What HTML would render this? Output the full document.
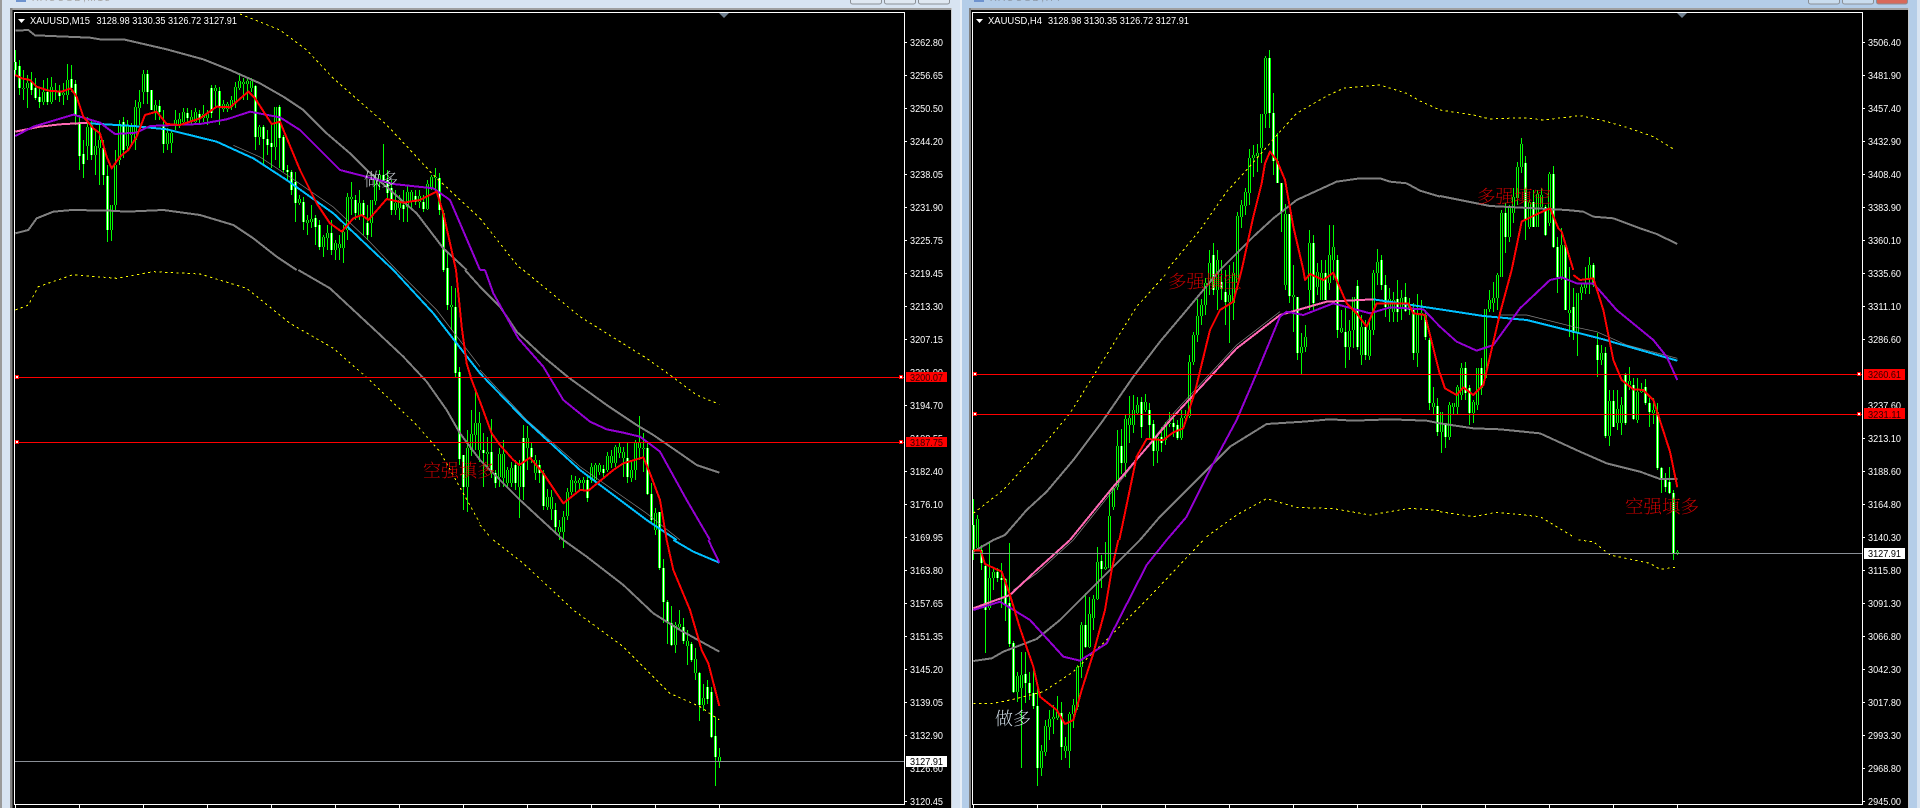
<!DOCTYPE html>
<html lang="zh">
<head>
<meta charset="utf-8">
<title>XAUUSD</title>
<style>
html,body{margin:0;padding:0;width:1920px;height:808px;overflow:hidden;background:#000}
svg{display:block;position:absolute;left:0;top:0}
.w{stroke:#00ff00;stroke-width:1;fill:none;shape-rendering:crispEdges}
.g{fill:none;stroke:#808080;stroke-width:6;stroke-linejoin:round;shape-rendering:crispEdges}
.r{fill:none;stroke:#ff0000;stroke-width:6;stroke-linejoin:round;shape-rendering:crispEdges}
.p{fill:none;stroke:#9400d3;stroke-width:6;stroke-linejoin:round;shape-rendering:crispEdges}
.b{fill:none;stroke:#00bfff;stroke-width:6;stroke-linejoin:round;shape-rendering:crispEdges}
.k{fill:none;stroke:#ff69b4;stroke-width:6;stroke-linejoin:round;shape-rendering:crispEdges}
.y{fill:none;stroke:#ffff00;stroke-width:3;stroke-dasharray:7 10;shape-rendering:crispEdges}
.t{fill:none;stroke:#8a8a8a;stroke-width:2}
text{font-family:"Liberation Sans","Noto Sans CJK SC",sans-serif}
.ax{font-size:10px;fill:#fff}
.ti{font-size:10px;fill:#fff}
.lb{font-size:10px;fill:#300}
.cn{font-family:"Liberation Serif","Noto Serif CJK SC",serif;font-size:18px;font-weight:200}
</style>
</head>
<body>
<svg width="1920" height="808" viewBox="0 0 1920 808" xmlns="http://www.w3.org/2000/svg">
<defs>
<path id="lw" d="M15.5 62V70M19.5 66V88M31.5 82V90M35.5 88V98M39.5 97V102M47.5 92V102M59.5 92V96M71.5 79V88M75.5 84V115M79.5 123V156M83.5 154V164M91.5 125V155M103.5 148V175M107.5 176V230M123.5 122V150M147.5 74V92M151.5 90V110M159.5 106V112M163.5 126V144M187.5 113V118M199.5 114V118M211.5 88V113M219.5 91V106M255.5 86V137M263.5 127V139M267.5 139V145M271.5 143V147M279.5 107V138M283.5 137V170M287.5 170V172M291.5 172V190M295.5 182V203M303.5 202V222M315.5 218V227M319.5 225V247M331.5 233V250M355.5 200V213M363.5 203V215M367.5 223V235M383.5 175V182M387.5 180V193M391.5 188V210M403.5 205V209M415.5 196V202M423.5 202V209M439.5 178V210M443.5 213V270M447.5 268V305M455.5 307V373M459.5 372V459M463.5 455V487M483.5 450V453M491.5 452V473M495.5 473V483M515.5 465V483M523.5 438V487M531.5 448V457M539.5 465V473M543.5 473V506M555.5 510V527M587.5 480V498M603.5 469V473M627.5 458V477M647.5 448V494M651.5 494V520M659.5 512V568M663.5 568V602M667.5 602V622M671.5 623V645M683.5 627V641M691.5 644V660M699.5 673V705M707.5 687V699M711.5 692V737M715.5 736V757"/>
<path id="lk" d="M23.5 88V89M27.5 83V88M43.5 92V102M51.5 87V102M55.5 90V92M63.5 93V95M67.5 80V95M87.5 127V146M95.5 146V155M99.5 140V148M111.5 205V230M115.5 165V205M119.5 125V160M127.5 125V146M131.5 127V135M135.5 107V140M139.5 102V108M143.5 74V92M155.5 105V112M167.5 133V144M171.5 133V143M175.5 120V125M179.5 119V125M183.5 112V122M191.5 117V122M195.5 112V122M203.5 114V118M207.5 114V118M215.5 88V91M223.5 104V109M227.5 104V109M231.5 100V107M235.5 87V103M239.5 81V88M243.5 82V84M247.5 81V84M251.5 81V88M259.5 127V137M275.5 107V147M299.5 199V203M307.5 220V223M311.5 219V222M323.5 237V247M327.5 233V238M335.5 243V250M339.5 244V248M343.5 232V248M347.5 197V230M351.5 197V199M359.5 203V215M371.5 200V223M375.5 180V201M379.5 175V180M395.5 203V210M399.5 200V208M407.5 192V207M411.5 192V202M419.5 196V202M427.5 184V209M431.5 177V188M435.5 177V178M451.5 305V307M467.5 448V487M471.5 434V450M475.5 423V435M479.5 423V450M487.5 452V454M499.5 454V477M503.5 454V478M507.5 470V483M511.5 468V483M519.5 466V487M527.5 438V448M535.5 460V473M547.5 497V507M551.5 497V509M559.5 527V532M563.5 517V532M567.5 492V516M571.5 480V492M575.5 481V483M579.5 480V483M583.5 480V483M591.5 467V480M595.5 465V480M599.5 465V472M607.5 456V470M611.5 456V463M615.5 447V463M619.5 447V453M623.5 452V458M631.5 470V478M635.5 442V470M639.5 442V448M643.5 448V449M655.5 513V530M679.5 624V627M675.5 625V645M687.5 641V646M695.5 659V673M703.5 698V705M719.5 757V761"/>
<path id="rw" d="M973.5 525V550M981.5 550V563M985.5 566V610M997.5 572V578M1001.5 578V580M1005.5 579V605M1009.5 603V644M1013.5 643V692M1025.5 674V683M1029.5 683V693M1033.5 693V706M1037.5 706V768M1061.5 713V747M1085.5 625V647M1101.5 561V569M1121.5 446V463M1141.5 402V427M1149.5 410V425M1153.5 424V451M1161.5 437V443M1173.5 423V427M1177.5 425V438M1213.5 255V290M1221.5 282V289M1225.5 292V302M1269.5 58V113M1273.5 113V161M1277.5 161V183M1281.5 183V212M1289.5 214V296M1297.5 297V353M1313.5 243V303M1325.5 273V300M1337.5 260V330M1345.5 332V347M1357.5 286V347M1365.5 327V355M1381.5 260V285M1385.5 285V307M1397.5 299V312M1405.5 297V311M1409.5 305V310M1413.5 310V353M1425.5 315V337M1429.5 340V403M1437.5 406V432M1445.5 423V437M1465.5 368V393M1469.5 388V413M1481.5 368V388M1505.5 213V237M1525.5 163V220M1533.5 202V227M1545.5 207V235M1553.5 174V247M1557.5 247V277M1565.5 245V310M1573.5 307V333M1593.5 265V285M1597.5 345V360M1605.5 353V436M1613.5 401V427M1625.5 375V423M1633.5 385V419M1645.5 387V403M1649.5 403V412M1657.5 412V468M1661.5 468V480M1665.5 480V487M1669.5 482V493M1673.5 493V553"/>
<path id="rk" d="M977.5 519V548M989.5 578V608M993.5 572V578M1017.5 676V692M1021.5 675V688M1041.5 751V768M1045.5 726V752M1049.5 719V727M1053.5 717V719M1057.5 712V718M1065.5 746V751M1069.5 714V751M1073.5 705V714M1077.5 667V707M1081.5 625V667M1089.5 614V647M1093.5 599V618M1097.5 562V599M1105.5 567V569M1109.5 516V568M1113.5 489V507M1117.5 446V487M1125.5 419V463M1129.5 418V425M1133.5 410V425M1137.5 405V413M1145.5 402V410M1157.5 437V451M1165.5 424V440M1169.5 423V424M1181.5 418V438M1185.5 416V418M1189.5 362V416M1193.5 335V362M1197.5 316V335M1201.5 305V316M1205.5 283V305M1209.5 263V283M1217.5 260V290M1229.5 295V302M1233.5 273V303M1237.5 216V283M1241.5 205V217M1245.5 192V206M1249.5 158V193M1253.5 155V158M1257.5 153V156M1261.5 114V148M1265.5 58V114M1285.5 214V285M1293.5 295V297M1301.5 347V353M1305.5 337V347M1309.5 243V290M1317.5 272V287M1321.5 273V300M1329.5 255V283M1333.5 247V260M1341.5 328V332M1349.5 331V347M1353.5 297V330M1361.5 327V355M1369.5 330V356M1373.5 273V330M1377.5 262V273M1389.5 299V309M1393.5 300V312M1401.5 298V309M1417.5 313V353M1421.5 313V315M1433.5 403V407M1441.5 412V432M1449.5 405V437M1453.5 403V407M1457.5 387V407M1461.5 368V395M1473.5 402V413M1477.5 368V405M1485.5 309V378M1489.5 300V309M1493.5 298V303M1497.5 275V298M1501.5 213V277M1509.5 207V237M1513.5 197V213M1517.5 167V198M1521.5 144V167M1529.5 202V227M1537.5 194V227M1541.5 195V207M1549.5 174V223M1561.5 245V277M1569.5 310V313M1577.5 293V333M1581.5 287V293M1585.5 283V288M1589.5 265V278M1601.5 353V360M1609.5 401V436M1617.5 409V423M1621.5 405V423M1629.5 381V385M1637.5 392V420M1641.5 389V392M1653.5 410V413M1677.5 552V554"/>
</defs>

<!-- window chrome -->
<rect width="960" height="808" fill="#d8e4f2"/>
<rect x="960" width="960" height="808" fill="#b4cde8"/>
<rect x="0" width="2" height="808" fill="#9a9a9a"/>
<rect x="1917" width="3" height="808" fill="#d8e4f2"/>
<rect x="960" width="2" height="808" fill="#e8eff7"/>
<rect x="11" y="8" width="940" height="800" fill="#000"/>
<rect x="969" y="8" width="939" height="800" fill="#000"/>
<rect x="10" y="8" width="942" height="2" fill="#a0a0a0"/>
<rect x="969" y="8" width="940" height="2" fill="#a0a0a0"/>
<rect x="10" y="8" width="2.5" height="800" fill="#808080"/>
<rect x="951" y="8" width="1" height="800" fill="#c8c8c8"/>
<rect x="969" y="8" width="2" height="800" fill="#808080"/>
<rect x="1908" y="8" width="1" height="800" fill="#c8c8c8"/>

<!-- title-bar remnants -->
<rect x="16" y="0" width="10" height="2" fill="#6e93cf"/>
<text x="32" y="1" font-size="10" fill="#a8a8a8" textLength="78">XAUUSD,M15</text>
<rect x="974" y="0" width="10" height="2" fill="#6e93cf"/>
<text x="990" y="1" font-size="10" fill="#8d98a6" textLength="70">XAUUSD,H4</text>
<g fill="#dfe8f2" stroke="#8a8f96">
<rect x="850.5" y="-4" width="31" height="8" rx="2"/>
<rect x="884.5" y="-4" width="31" height="8" rx="2"/>
<rect x="918.5" y="-4" width="31" height="8" rx="2"/>
<rect x="1808.5" y="-4" width="31" height="8" rx="2" fill="#c9dcee"/>
<rect x="1842.5" y="-4" width="31" height="8" rx="2" fill="#c9dcee"/>
<rect x="1876.5" y="-4" width="31" height="8" rx="2" fill="#d8695a"/>
</g>

<!-- frames -->
<g fill="#fff">
<rect x="14" y="12" width="891" height="1"/>
<rect x="14" y="12" width="1" height="793"/>
<rect x="904" y="12" width="1" height="793"/>
<rect x="14" y="804" width="891" height="1"/>
<rect x="972" y="12" width="891" height="1"/>
<rect x="972" y="12" width="1" height="793"/>
<rect x="1862" y="12" width="1" height="793"/>
<rect x="972" y="804" width="891" height="1"/>
</g>
<path stroke="#fff" fill="none" shape-rendering="crispEdges" d="M15.5 805V808M79.5 805V808M143.5 805V808M207.5 805V808M271.5 805V808M335.5 805V808M399.5 805V808M463.5 805V808M527.5 805V808M591.5 805V808M655.5 805V808M719.5 805V808M973.5 805V808M1037.5 805V808M1101.5 805V808M1165.5 805V808M1229.5 805V808M1293.5 805V808M1357.5 805V808M1421.5 805V808M1485.5 805V808M1549.5 805V808M1613.5 805V808M1677.5 805V808"/>

<!-- shift markers / title -->
<path d="M719 13h10l-5 5z" fill="#708090"/>
<path d="M1677 13h10l-5 5z" fill="#708090"/>
<path d="M18 19h7l-3.500 4z" fill="#fff"/>
<path d="M976 19h7l-3.500 4z" fill="#fff"/>
<text class="ti" x="30" y="24" textLength="60" lengthAdjust="spacingAndGlyphs">XAUUSD,M15</text>
<text class="ti" x="96.500" y="24" textLength="140.500" lengthAdjust="spacingAndGlyphs">3128.98 3130.35 3126.72 3127.91</text>
<text class="ti" x="988" y="24" textLength="54" lengthAdjust="spacingAndGlyphs">XAUUSD,H4</text>
<text class="ti" x="1048" y="24" textLength="141" lengthAdjust="spacingAndGlyphs">3128.98 3130.35 3126.72 3127.91</text>

<!-- LEFT candles -->
<path class="w" d="M15.5 50V75M19.500 60V95M23.500 70V100M27.500 75V108M31.500 72V95M35.500 78V100M39.500 87V108M43.500 80V105M47.500 78V105M51.500 77V104M55.500 83V100M59.500 85V102M63.500 83V105M67.500 64V100M71.500 65V92M75.500 80V125M79.500 115V170M83.500 140V178M87.500 117V160M91.500 120V160M95.500 130V175M99.500 125V185M103.500 140V185M107.500 165V242M111.500 205V241M115.500 150V210M119.500 120V165M123.500 117V158M127.500 120V150M131.500 123V145M135.500 100V150M139.500 90V125M143.500 70V104M147.500 70V104M151.500 90V110M155.500 100V120M159.500 100V120M163.500 110V153M167.500 128V150M171.500 130V153M175.500 110V130M179.500 113V128M183.500 108V125M187.500 108V122M191.500 110V125M195.500 108V125M199.500 110V125M203.500 105V122M207.500 110V125M211.500 85V118M215.500 85V107M219.500 87V125M223.500 100V112M227.500 102V112M231.500 96V110M235.500 82V108M239.500 75V90M243.500 78V100M247.500 78V100M251.500 78V92M255.500 85V150M259.500 125V145M263.500 125V165M267.500 130V155M271.500 125V168M275.500 107V160M279.500 105V168M283.500 135V172M287.500 165V180M291.500 170V195M295.500 172V222M299.500 195V205M303.500 197V230M307.500 215V235M311.500 205V228M315.500 215V245M319.500 220V250M323.500 235V257M327.500 225V250M331.500 220V255M335.500 240V260M339.500 235V260M343.500 225V263M347.500 193V240M351.500 182V215M355.500 195V220M359.500 190V220M363.500 200V235M367.500 205V240M371.500 200V237M375.500 175V205M379.500 170V190M383.500 144V180M387.500 170V200M391.500 180V215M395.500 190V215M399.500 195V220M403.500 190V222M407.500 185V222M411.500 190V210M415.500 190V205M419.500 190V208M423.500 195V212M427.500 180V210M431.500 175V190M435.500 168V190M439.500 173V215M443.500 210V272M447.500 252V310M451.500 286V330M455.500 288V377M459.500 367V465M463.500 455V510M467.500 430V512M471.500 410V456M475.500 391V450M479.500 412V462M483.500 433V487M487.500 437V470M491.500 419V478M495.500 470V488M499.500 448V487M503.500 440V487M507.500 467V487M511.500 462V487M515.500 460V490M519.500 460V518M523.500 425V500M527.500 426V470M531.500 443V463M535.500 455V480M539.500 460V483M543.500 470V510M547.500 489V510M551.500 490V520M555.500 503V532M559.500 520V540M563.500 511V548M567.500 488V520M571.500 475V495M575.500 476V492M579.500 478V490M583.500 477V490M587.500 475V502M591.500 463V483M595.500 463V483M599.500 463V475M603.500 465V478M607.500 452V472M611.500 450V468M615.500 445V467M619.500 443V458M623.500 447V477M627.500 443V483M631.500 460V482M635.500 440V480M639.500 416V460M643.500 433V472M647.500 443V495M651.500 483V523M655.500 508V535M659.500 512V570M663.500 559V623M667.500 600V644M671.500 606V646M675.500 622V653M679.500 610V630M683.500 618V644M687.500 630V665M691.500 642V662M695.500 648V680M699.500 672V721M703.500 684V711M707.500 680V704M711.500 687V738M715.500 717V786M719.500 748V768"/>
<use href="#lw" stroke="#00ff00" stroke-width="3" shape-rendering="crispEdges"/>
<use href="#lk" stroke="#00ff00" stroke-width="3" shape-rendering="crispEdges"/>
<use href="#lw" stroke="#ffffff" stroke-width="1" shape-rendering="crispEdges"/>
<use href="#lk" stroke="#000000" stroke-width="1" shape-rendering="crispEdges"/>

<!-- RIGHT candles -->
<path class="w" d="M973.500 499V560M977.500 515V550M981.500 545V570M985.500 563V653M989.500 543V610M993.500 568V590M997.500 568V582M1001.500 563V608M1005.500 578V621M1009.500 543V647M1013.500 641V693M1017.500 672V702M1021.500 652V768M1025.500 652V703M1029.500 672V700M1033.500 670V709M1037.500 688V786M1041.500 745V776M1045.500 720V756M1049.500 710V740M1053.500 705V734M1057.500 696V720M1061.500 702V760M1065.500 737V758M1069.500 712V768M1073.500 699V728M1077.500 665V710M1081.500 622V678M1085.500 593V648M1089.500 597V648M1093.500 595V630M1097.500 547V600M1101.500 555V588M1105.500 542V570M1109.500 490V568M1113.500 487V510M1117.500 430V490M1121.500 429V474M1125.500 415V477M1129.500 396V443M1133.500 395V433M1137.500 397V415M1141.500 397V438M1145.500 394V412M1149.500 403V440M1153.500 420V466M1157.500 433V463M1161.500 427V452M1165.500 422V445M1169.500 412V427M1173.500 413V437M1177.500 420V440M1181.500 410V440M1185.500 410V420M1189.500 355V418M1193.500 332V365M1197.500 299V342M1201.500 299V325M1205.500 278V315M1209.500 250V295M1213.500 243V295M1217.500 250V310M1221.500 260V300M1225.500 270V325M1229.500 265V343M1233.500 262V320M1237.500 212V290M1241.500 200V228M1245.500 188V215M1249.500 149V205M1253.500 145V177M1257.500 144V172M1261.500 114V163M1265.500 56V128M1269.500 50V128M1273.500 93V175M1277.500 133V183M1281.500 183V232M1285.500 204V290M1289.500 214V303M1293.500 265V332M1297.500 297V360M1301.500 333V375M1305.500 325V352M1309.500 230V310M1313.500 235V310M1317.500 263V295M1321.500 260V300M1325.500 260V300M1329.500 225V290M1333.500 225V280M1337.500 255V338M1341.500 310V333M1345.500 308V368M1349.500 320V360M1353.500 297V348M1357.500 280V350M1361.500 315V365M1365.500 320V360M1369.500 320V360M1373.500 270V335M1377.500 249V285M1381.500 255V290M1385.500 275V317M1389.500 288V322M1393.500 292V322M1397.500 280V322M1401.500 290V320M1405.500 283V312M1409.500 298V315M1413.500 303V360M1417.500 294V367M1421.500 300V320M1425.500 310V340M1429.500 338V410M1433.500 387V415M1437.500 398V436M1441.500 412V453M1445.500 423V448M1449.500 402V440M1453.500 403V415M1457.500 385V415M1461.500 363V400M1465.500 362V400M1469.500 385V425M1473.500 400V423M1477.500 368V410M1481.500 358V395M1485.500 309V378M1489.500 290V312M1493.500 282V312M1497.500 273V310M1501.500 210V277M1505.500 203V253M1509.500 205V242M1513.500 188V223M1517.500 162V205M1521.500 138V173M1525.500 156V240M1529.500 200V229M1533.500 190V227M1537.500 190V227M1541.500 188V209M1545.500 205V236M1549.500 172V226M1553.500 166V248M1557.500 237V293M1561.500 228V280M1565.500 245V310M1569.500 267V337M1573.500 288V340M1577.500 293V356M1581.500 283V300M1585.500 267V294M1589.500 257V294M1593.500 263V287M1597.500 333V377M1601.500 345V365M1605.500 347V438M1609.500 390V446M1613.500 390V427M1617.500 390V430M1621.500 397V435M1625.500 373V425M1629.500 367V390M1633.500 378V420M1637.500 378V423M1641.500 383V393M1645.500 379V405M1649.500 398V427M1653.500 398V424M1657.500 403V470M1661.500 467V493M1665.500 473V492M1669.500 467V494M1673.500 490V560M1677.500 550V555"/>
<use href="#rw" stroke="#00ff00" stroke-width="3" shape-rendering="crispEdges"/>
<use href="#rk" stroke="#00ff00" stroke-width="3" shape-rendering="crispEdges"/>
<use href="#rw" stroke="#ffffff" stroke-width="1" shape-rendering="crispEdges"/>
<use href="#rk" stroke="#000000" stroke-width="1" shape-rendering="crispEdges"/>

<!-- LEFT lines -->
<g transform="scale(.33333)">
<polyline class="g" points="46,92 85,90 105,106 270,113 300,118 370,118 500,148 610,178 690,210 780,250 850,290 910,330 980,400 1050,460 1100,510 1170,570 1250,640 1330,745 1400,810"/>
<polyline class="g" points="46,700 85,690 110,655 160,635 215,630 330,632 380,635 490,630 600,645 700,675 760,715 830,770 890,810"/>
<polyline class="y" points="720,42 840,90 920,150 1000,235 1080,305 1160,375 1240,460 1300,525 1440,655"/>
<polyline class="t" points="700,436 780,471 870,531 1000,621 1100,716 1190,810"/>
<polyline class="k" points="46,395 120,380 180,373 265,368"/>
<polyline class="b" points="265,370 400,378 500,388 650,425 760,475 860,540 1000,640 1100,735 1180,810"/>
<polyline class="p" points="46,408 100,380 160,362 220,344 300,368 345,402 410,398 450,378 600,372 680,358 750,335 840,352 900,390 1020,510 1090,528 1180,552 1300,565 1350,600 1440,810"/>
<polyline class="r" points="46,225 65,235 90,240 110,260 145,272 185,275 212,265 230,290 250,350 280,385 300,400 320,470 335,505 360,470 385,450 410,410 435,345 470,335 500,372 540,375 600,355 650,320 690,322 745,275 765,295 815,372 840,365 900,510 950,610 990,670 1025,695 1060,655 1085,645 1105,660 1160,597 1210,608 1260,600 1310,575 1330,640 1368,810"/>
</g>
<g transform="translate(0,270) scale(.33333)">
<polyline class="g" points="895,0 990,55 1060,120 1130,185 1210,260 1280,335 1340,420 1380,490 1440,570"/>
<polyline class="g" points="1395,0 1440,50"/>
<polyline class="y" points="46,120 85,105 115,50 220,14 350,25 460,5 600,12 740,55 870,160 1000,235 1100,322 1250,465 1320,545 1440,760"/>
<polyline class="t" points="1190,0 1310,120 1440,290"/>
<polyline class="b" points="1180,0 1300,130 1440,310"/>
<polyline class="r" points="1368,0 1385,170 1400,280 1415,330 1440,395"/>
</g>
<g transform="translate(480,0) scale(.33333)">
<polyline class="y" points="0,655 115,800 130,810"/>
<polyline class="p" points="0,810 15,810"/>
</g>
<g transform="translate(480,270) scale(.33333)">
<polyline class="g" points="0,50 60,110 110,185 190,260 265,322 380,405 470,465 520,495 600,550 650,585 718,608"/>
<polyline class="g" points="0,570 120,690 250,810"/>
<polyline class="y" points="130,0 300,140 500,265 570,315 650,375 718,403"/>
<polyline class="y" points="0,765 30,800"/>
<polyline class="t" points="0,300 140,450 300,590 500,730 600,810"/>
<polyline class="b" points="0,310 130,445 300,600 500,750 590,810"/>
<polyline class="p" points="15,0 40,70 115,205 190,290 250,390 330,455 380,478 430,488 480,500 540,545 620,690 690,810"/>
<polyline class="r" points="0,395 35,490 60,525 100,570 118,585 150,563 190,610 250,700 300,660 325,662 400,600 430,580 490,562 510,610 540,690 560,810"/>
</g>
<g transform="translate(480,540) scale(.33333)">
<polyline class="g" points="250,0 320,50 430,135 520,220 600,270 718,335"/>
<polyline class="y" points="40,0 130,70 280,210 430,320 570,460 660,500 718,540"/>
<polyline class="b" points="580,0 640,35 718,68"/>
<polyline class="p" points="685,0 718,68"/>
<polyline class="r" points="560,0 580,90 630,210 665,330 685,370 718,498"/>
</g>

<!-- RIGHT lines -->
<g transform="translate(960,0) scale(.33333)">
<polyline class="g" points="780,810 880,710 940,655 1010,600 1130,545 1200,535 1260,535 1290,545 1340,550 1380,572 1440,590"/>
<polyline class="y" points="625,805 720,690 800,575 860,510 960,395 1010,340 1100,288 1150,265 1260,255 1340,280 1380,303 1440,330"/>
<polyline class="r" points="845,810 880,650 905,550 915,490 930,455 950,480 975,540 1000,680 1030,810"/>
</g>
<g transform="translate(1440,0) scale(.33333)">
<polyline class="g" points="0,588 60,600 150,618 380,630 430,635 460,650 520,655 600,685 650,702 712,732"/>
<polyline class="y" points="0,330 100,345 150,357 250,353 310,360 420,347 490,362 560,382 640,410 705,450"/>
<polyline class="r" points="215,810 245,665 285,645 330,625 355,685 365,695 400,810"/>
</g>
<g transform="translate(960,270) scale(.33333)">
<polyline class="g" points="100,810 135,795 200,720 260,665 340,570 430,450 520,320 600,215 680,120 780,0"/>
<polyline class="g" points="540,810 600,740 750,590 810,530 920,462 1030,455 1110,448 1180,452 1290,448 1400,452 1440,460"/>
<polyline class="y" points="40,730 130,660 230,550 330,430 430,270 530,110 620,10"/>
<polyline class="y" points="740,800 830,735 920,686 1010,712 1120,716 1230,735 1350,715 1440,722"/>
<polyline class="t" points="340,810 460,660 640,430 830,225 960,125"/>
<polyline class="k" points="330,810 460,650 640,440 830,235 960,135 1100,95 1240,88"/>
<polyline class="b" points="1240,88 1440,118"/>
<polyline class="p" points="620,810 680,740 760,580 830,450 890,310 960,140 980,125 1030,135 1120,100 1230,130 1290,112 1390,118 1440,170"/>
<polyline class="r" points="478,810 530,560 560,507 610,510 640,487 670,475 705,365 750,180 780,120 820,95 845,0"/>
<polyline class="r" points="1030,0 1035,30 1050,12 1090,30 1120,8 1160,100 1190,130 1220,170 1250,100 1300,100 1345,100 1360,130 1395,135 1440,315"/>
</g>
<g transform="translate(1440,270) scale(.33333)">
<polyline class="g" points="0,460 100,475 180,478 300,490 420,545 500,580 600,605 660,627 712,627"/>
<polyline class="y" points="0,725 100,740 170,727 300,740 400,800"/>
<polyline class="t" points="180,135 260,135 400,170 470,185 560,225 712,265"/>
<polyline class="b" points="0,118 130,138 260,150 400,185 490,208 600,240 712,272"/>
<polyline class="p" points="0,170 50,215 110,242 160,225 240,115 330,30 365,22 410,40 460,40 530,120 640,210 680,260 712,330"/>
<polyline class="r" points="0,310 15,355 50,375 70,352 100,375 130,345 180,130 215,0"/>
<polyline class="r" points="400,15 420,30 460,25 490,120 520,270 545,330 580,358 610,360 640,390 690,545 712,652"/>
</g>
<g transform="translate(960,540) scale(.33333)">
<polyline class="g" points="40,35 100,0"/>
<polyline class="g" points="40,363 95,355 130,335 230,297 300,240 370,170 450,90 540,0"/>
<polyline class="y" points="40,490 100,490 160,478 250,455 340,395 450,290 550,190 640,95 730,0"/>
<polyline class="t" points="160,150 230,100 340,0"/>
<polyline class="k" points="40,205 150,165 230,90 330,0"/>
<polyline class="p" points="40,210 120,185 210,240 310,350 360,362 440,310 560,75 620,0"/>
<polyline class="r" points="40,32 62,32 75,72 125,95 150,165 180,265 220,380 240,470 290,510 315,552 340,540 365,450 400,340 435,210 455,90 475,0"/>
</g>
<g transform="translate(1440,540) scale(.33333)">
<polyline class="y" points="415,0 460,5 510,45 630,70 660,88 705,82"/>
</g>

<!-- horizontal lines -->
<g shape-rendering="crispEdges">
<rect x="15" y="377" width="889" height="1" fill="#f00"/>
<rect x="15" y="442" width="889" height="1" fill="#f00"/>
<rect x="15" y="761" width="889" height="1" fill="#8a8f96"/>
<rect x="973" y="374" width="889" height="1" fill="#f00"/>
<rect x="973" y="414" width="889" height="1" fill="#f00"/>
<rect x="973" y="553" width="889" height="1" fill="#8a8f96"/>
<g fill="#fff" stroke="#f00">
<rect x="15.500" y="375.500" width="3" height="3"/>
<rect x="15.500" y="440.500" width="3" height="3"/>
<rect x="899.500" y="375.500" width="3" height="3"/>
<rect x="899.500" y="440.500" width="3" height="3"/>
<rect x="973.500" y="372.500" width="3" height="3"/>
<rect x="973.500" y="412.500" width="3" height="3"/>
<rect x="1857.500" y="372.500" width="3" height="3"/>
<rect x="1857.500" y="412.500" width="3" height="3"/>
</g>
</g>

<!-- chinese notes -->
<text class="cn" x="364" y="186" fill="#e8eef4" opacity=".85" textLength="34" lengthAdjust="spacingAndGlyphs">做多</text>
<text class="cn" x="423" y="477" fill="#d80000" textLength="72" lengthAdjust="spacingAndGlyphs">空强填多</text>
<text class="cn" x="1168" y="288" fill="#d80000" textLength="74" lengthAdjust="spacingAndGlyphs">多强填空</text>
<text class="cn" x="1477" y="203" fill="#d80000" textLength="74" lengthAdjust="spacingAndGlyphs">多强填空</text>
<text class="cn" x="1625" y="513" fill="#d80000" textLength="74" lengthAdjust="spacingAndGlyphs">空强填多</text>
<text class="cn" x="995" y="725" fill="#d8e4ee" textLength="36" lengthAdjust="spacingAndGlyphs">做多</text>

<!-- axes -->
<path stroke="#fff" fill="none" shape-rendering="crispEdges" d="M905 42.500H907M905 75.500H907M905 108.500H907M905 141.500H907M905 174.500H907M905 207.500H907M905 240.500H907M905 273.500H907M905 306.500H907M905 339.500H907M905 405.500H907M905 471.500H907M905 504.500H907M905 537.500H907M905 570.500H907M905 603.500H907M905 636.500H907M905 669.500H907M905 702.500H907M905 735.500H907M905 801.500H907M1863 42.500H1865M1863 75.500H1865M1863 108.500H1865M1863 141.500H1865M1863 174.500H1865M1863 207.500H1865M1863 240.500H1865M1863 273.500H1865M1863 306.500H1865M1863 339.500H1865M1863 438.500H1865M1863 471.500H1865M1863 504.500H1865M1863 537.500H1865M1863 570.500H1865M1863 603.500H1865M1863 636.500H1865M1863 669.500H1865M1863 702.500H1865M1863 735.500H1865M1863 768.500H1865M1863 801.500H1865"/>
<text class="ax" x="910" y="46" textLength="33" lengthAdjust="spacingAndGlyphs">3262.80</text>
<text class="ax" x="910" y="79" textLength="33" lengthAdjust="spacingAndGlyphs">3256.65</text>
<text class="ax" x="910" y="112" textLength="33" lengthAdjust="spacingAndGlyphs">3250.50</text>
<text class="ax" x="910" y="145" textLength="33" lengthAdjust="spacingAndGlyphs">3244.20</text>
<text class="ax" x="910" y="178" textLength="33" lengthAdjust="spacingAndGlyphs">3238.05</text>
<text class="ax" x="910" y="211" textLength="33" lengthAdjust="spacingAndGlyphs">3231.90</text>
<text class="ax" x="910" y="244" textLength="33" lengthAdjust="spacingAndGlyphs">3225.75</text>
<text class="ax" x="910" y="277" textLength="33" lengthAdjust="spacingAndGlyphs">3219.45</text>
<text class="ax" x="910" y="310" textLength="33" lengthAdjust="spacingAndGlyphs">3213.30</text>
<text class="ax" x="910" y="343" textLength="33" lengthAdjust="spacingAndGlyphs">3207.15</text>
<text class="ax" x="910" y="376" textLength="33" lengthAdjust="spacingAndGlyphs">3201.00</text>
<text class="ax" x="910" y="409" textLength="33" lengthAdjust="spacingAndGlyphs">3194.70</text>
<text class="ax" x="910" y="442" textLength="33" lengthAdjust="spacingAndGlyphs">3188.55</text>
<text class="ax" x="910" y="475" textLength="33" lengthAdjust="spacingAndGlyphs">3182.40</text>
<text class="ax" x="910" y="508" textLength="33" lengthAdjust="spacingAndGlyphs">3176.10</text>
<text class="ax" x="910" y="541" textLength="33" lengthAdjust="spacingAndGlyphs">3169.95</text>
<text class="ax" x="910" y="574" textLength="33" lengthAdjust="spacingAndGlyphs">3163.80</text>
<text class="ax" x="910" y="607" textLength="33" lengthAdjust="spacingAndGlyphs">3157.65</text>
<text class="ax" x="910" y="640" textLength="33" lengthAdjust="spacingAndGlyphs">3151.35</text>
<text class="ax" x="910" y="673" textLength="33" lengthAdjust="spacingAndGlyphs">3145.20</text>
<text class="ax" x="910" y="706" textLength="33" lengthAdjust="spacingAndGlyphs">3139.05</text>
<text class="ax" x="910" y="739" textLength="33" lengthAdjust="spacingAndGlyphs">3132.90</text>
<text class="ax" x="910" y="772" textLength="33" lengthAdjust="spacingAndGlyphs">3126.60</text>
<text class="ax" x="910" y="805" textLength="33" lengthAdjust="spacingAndGlyphs">3120.45</text>
<rect x="906" y="372" width="41" height="10" fill="#f00"/>
<rect x="906" y="437" width="41" height="10" fill="#f00"/>
<rect x="906" y="756" width="41" height="11" fill="#fff"/>
<text class="lb" x="910" y="381" textLength="33" lengthAdjust="spacingAndGlyphs">3200.07</text>
<text class="lb" x="910" y="446" textLength="33" lengthAdjust="spacingAndGlyphs">3187.75</text>
<text x="910" y="765" font-size="10" fill="#000" textLength="33" lengthAdjust="spacingAndGlyphs">3127.91</text>

<text class="ax" x="1868" y="46" textLength="33" lengthAdjust="spacingAndGlyphs">3506.40</text>
<text class="ax" x="1868" y="79" textLength="33" lengthAdjust="spacingAndGlyphs">3481.90</text>
<text class="ax" x="1868" y="112" textLength="33" lengthAdjust="spacingAndGlyphs">3457.40</text>
<text class="ax" x="1868" y="145" textLength="33" lengthAdjust="spacingAndGlyphs">3432.90</text>
<text class="ax" x="1868" y="178" textLength="33" lengthAdjust="spacingAndGlyphs">3408.40</text>
<text class="ax" x="1868" y="211" textLength="33" lengthAdjust="spacingAndGlyphs">3383.90</text>
<text class="ax" x="1868" y="244" textLength="33" lengthAdjust="spacingAndGlyphs">3360.10</text>
<text class="ax" x="1868" y="277" textLength="33" lengthAdjust="spacingAndGlyphs">3335.60</text>
<text class="ax" x="1868" y="310" textLength="33" lengthAdjust="spacingAndGlyphs">3311.10</text>
<text class="ax" x="1868" y="343" textLength="33" lengthAdjust="spacingAndGlyphs">3286.60</text>
<text class="ax" x="1868" y="376" textLength="33" lengthAdjust="spacingAndGlyphs">3262.10</text>
<text class="ax" x="1868" y="409" textLength="33" lengthAdjust="spacingAndGlyphs">3237.60</text>
<text class="ax" x="1868" y="442" textLength="33" lengthAdjust="spacingAndGlyphs">3213.10</text>
<text class="ax" x="1868" y="475" textLength="33" lengthAdjust="spacingAndGlyphs">3188.60</text>
<text class="ax" x="1868" y="508" textLength="33" lengthAdjust="spacingAndGlyphs">3164.80</text>
<text class="ax" x="1868" y="541" textLength="33" lengthAdjust="spacingAndGlyphs">3140.30</text>
<text class="ax" x="1868" y="574" textLength="33" lengthAdjust="spacingAndGlyphs">3115.80</text>
<text class="ax" x="1868" y="607" textLength="33" lengthAdjust="spacingAndGlyphs">3091.30</text>
<text class="ax" x="1868" y="640" textLength="33" lengthAdjust="spacingAndGlyphs">3066.80</text>
<text class="ax" x="1868" y="673" textLength="33" lengthAdjust="spacingAndGlyphs">3042.30</text>
<text class="ax" x="1868" y="706" textLength="33" lengthAdjust="spacingAndGlyphs">3017.80</text>
<text class="ax" x="1868" y="739" textLength="33" lengthAdjust="spacingAndGlyphs">2993.30</text>
<text class="ax" x="1868" y="772" textLength="33" lengthAdjust="spacingAndGlyphs">2968.80</text>
<text class="ax" x="1868" y="805" textLength="33" lengthAdjust="spacingAndGlyphs">2945.00</text>
<rect x="1864" y="369" width="41" height="11" fill="#f00"/>
<rect x="1864" y="408" width="41" height="11" fill="#f00"/>
<rect x="1864" y="548" width="41" height="11" fill="#fff"/>
<text class="lb" x="1868" y="378" textLength="33" lengthAdjust="spacingAndGlyphs">3260.61</text>
<text class="lb" x="1868" y="418" textLength="33" lengthAdjust="spacingAndGlyphs">3231.11</text>
<text x="1868" y="557" font-size="10" fill="#000" textLength="33" lengthAdjust="spacingAndGlyphs">3127.91</text>
</svg>
</body>
</html>
